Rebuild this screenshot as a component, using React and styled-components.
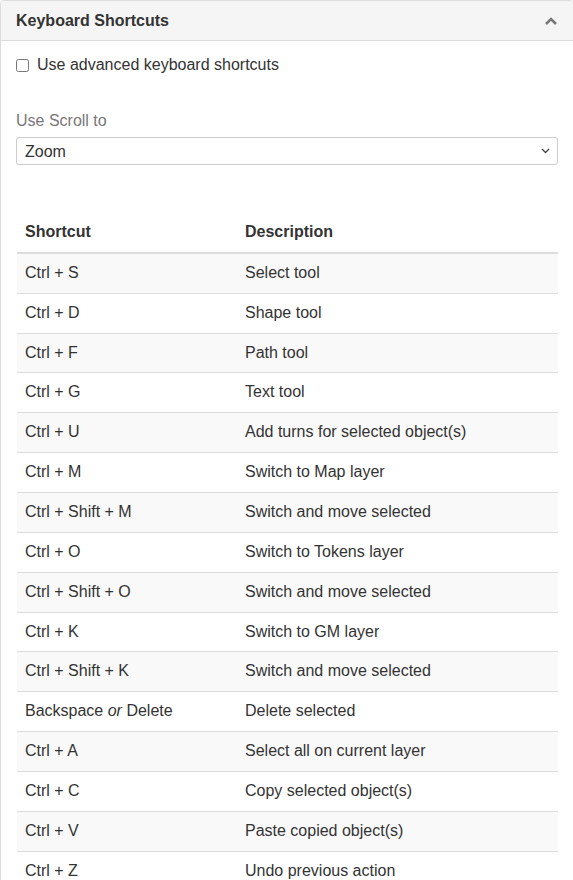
import React from 'react';
import styled, { createGlobalStyle } from 'styled-components';

const Global = createGlobalStyle`
body {
  margin: 0;
  background: #fff;
  overflow: hidden;
  font-family: "Liberation Sans", Arial, sans-serif;
  color: #333;
}
`

const Panel = styled.div`
width: calc(100% + 1px);
box-sizing: border-box;
border: 1px solid #ddd;
border-radius: 4px;
background: #fff;
`

const PanelHeader = styled.div`
height: 39px;
padding: 0 15px;
display: flex;
align-items: center;
justify-content: space-between;
background: #f5f5f5;
border-bottom: 1px solid #ddd;
border-radius: 3px 3px 0 0;
`

const Title = styled.div`
font-size: 16px;
font-weight: bold;
color: #333;
`

const Body = styled.div`
padding: 13px 15px 0 15px;
`

const CheckRow = styled.label`
display: flex;
align-items: center;
font-size: 16px;
line-height: 22px;
`

const Check = styled.input`
margin: 0 8px 0 0;
width: 13px;
height: 13px;
`

const FieldLabel = styled.div`
margin-top: 34px;
font-size: 16px;
line-height: 22px;
color: #777;
`

const SelectWrap = styled.div`
position: relative;
margin-top: 5px;
`

const Select = styled.select`
appearance: none;
display: block;
width: 100%;
height: 28px;
box-sizing: border-box;
border: 1px solid #ccc;
border-radius: 3px;
padding: 0 8px;
font-family: "Liberation Sans", Arial, sans-serif;
font-size: 16px;
color: #333;
background: #fff;
`

const SelectArrow = styled.svg`
position: absolute;
right: 8px;
top: 11px;
pointer-events: none;
`

const Table = styled.table`
margin: 48px 0 0 1px;
width: calc(100% - 1px);
border-collapse: collapse;
font-size: 16px;
line-height: 22.86px;
`

const Th = styled.th`
text-align: left;
font-weight: bold;
padding: 8px;
border-bottom: 2px solid #ddd;
width: ${p => p.$w || 'auto'};
`

const Row = styled.tr`
background: ${p => (p.$odd ? '#f9f9f9' : '#fff')};
`

const Td = styled.td`
padding: 8px;
border-top: 1px solid #ddd;
`

const shortcuts = [
  ['Ctrl + S', 'Select tool'],
  ['Ctrl + D', 'Shape tool'],
  ['Ctrl + F', 'Path tool'],
  ['Ctrl + G', 'Text tool'],
  ['Ctrl + U', 'Add turns for selected object(s)'],
  ['Ctrl + M', 'Switch to Map layer'],
  ['Ctrl + Shift + M', 'Switch and move selected'],
  ['Ctrl + O', 'Switch to Tokens layer'],
  ['Ctrl + Shift + O', 'Switch and move selected'],
  ['Ctrl + K', 'Switch to GM layer'],
  ['Ctrl + Shift + K', 'Switch and move selected'],
  [<>Backspace <i>or</i> Delete</>, 'Delete selected'],
  ['Ctrl + A', 'Select all on current layer'],
  ['Ctrl + C', 'Copy selected object(s)'],
  ['Ctrl + V', 'Paste copied object(s)'],
  ['Ctrl + Z', 'Undo previous action'],
  ['Ctrl + Y', 'Redo previous action'],
];

const ChevronUp = () => (
  <svg width="14" height="10" viewBox="0 0 14 10">
    <polyline points="2,8 7,3 12,8" fill="none" stroke="#777" strokeWidth="2.6" />
  </svg>
);

export default function App() {
  return (
    <>
      <Global />
      <Panel>
        <PanelHeader>
          <Title>Keyboard Shortcuts</Title>
          <ChevronUp />
        </PanelHeader>
        <Body>
          <CheckRow>
            <Check type="checkbox" />
            Use advanced keyboard shortcuts
          </CheckRow>
          <FieldLabel>Use Scroll to</FieldLabel>
          <SelectWrap>
            <Select defaultValue="zoom">
              <option value="zoom">Zoom</option>
              <option value="pan">Pan</option>
            </Select>
            <SelectArrow width="9" height="6" viewBox="0 0 9 6">
              <polyline points="1,1 4.5,4.5 8,1" fill="none" stroke="#444" strokeWidth="1.3" />
            </SelectArrow>
          </SelectWrap>
          <Table>
            <thead>
              <tr>
                <Th $w="204px">Shortcut</Th>
                <Th>Description</Th>
              </tr>
            </thead>
            <tbody>
              {shortcuts.map((s, i) => (
                <Row key={i} $odd={i % 2 === 0}>
                  <Td>{s[0]}</Td>
                  <Td>{s[1]}</Td>
                </Row>
              ))}
            </tbody>
          </Table>
        </Body>
      </Panel>
    </>
  );
}
